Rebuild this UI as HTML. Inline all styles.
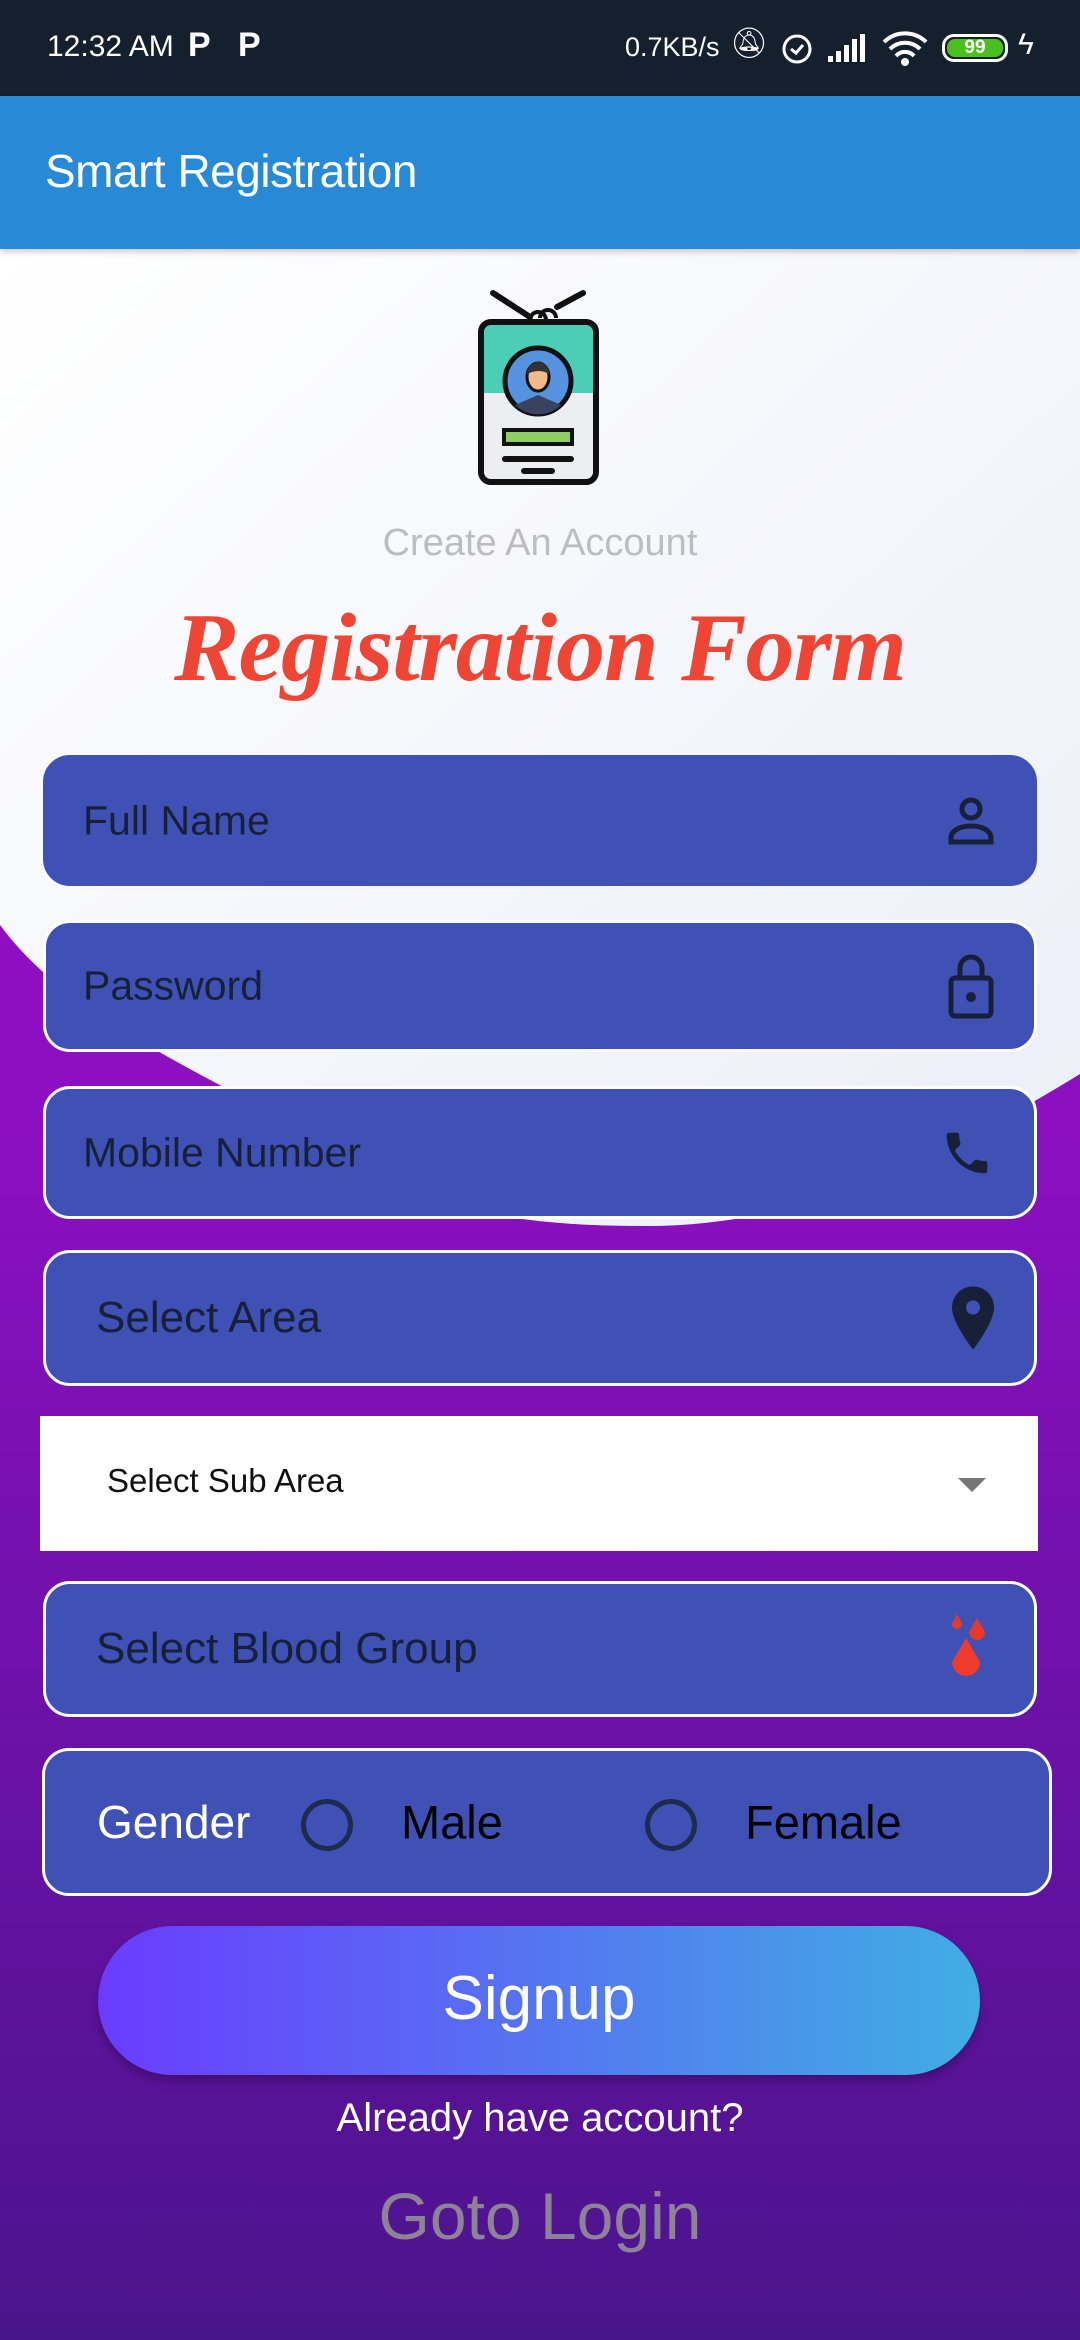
<!DOCTYPE html>
<html><head><meta charset="utf-8"><style>
*{margin:0;padding:0;box-sizing:border-box}
body{width:1080px;height:2340px;position:relative;overflow:hidden;font-family:"Liberation Sans",sans-serif;background:linear-gradient(#a60cd6 0%,#8a0fc0 50%,#4a148c 100%)}
.abs{position:absolute}
.f{position:absolute;left:43px;width:994px;background:#3f51b5;border-radius:27px;border:3px solid #fff}
.f span{position:absolute;top:50%;transform:translateY(-50%);font-size:41px;color:#172038}
.ic{position:absolute;right:40px;top:50%;transform:translateY(-50%)}
</style></head><body>
<svg class="abs" style="left:0;top:0" width="1080" height="1240">
<defs><linearGradient id="wg" x1="0" y1="0" x2="1" y2="1"><stop offset="0" stop-color="#ffffff"/><stop offset="1" stop-color="#eceef8"/></linearGradient></defs>
<path d="M0 240 H1080 V1074 C940 1160 800 1228 640 1226 C520 1226 420 1210 340 1150 C200 1070 70 1020 0 925 Z" fill="url(#wg)"/>
</svg>
<div class="abs" style="left:0;top:0;width:1080px;height:96px;background:#15202f;color:#fff;font-size:30px">
<span class="abs" style="left:47px;top:30px">12:32 AM</span>
<span class="abs" style="left:188px;top:26px;font-weight:bold;font-size:34px">P</span>
<span class="abs" style="left:238px;top:26px;font-weight:bold;font-size:34px">P</span>
<span class="abs" style="left:625px;top:32px;font-size:27px">0.7KB/s</span>
<span class="abs" style="left:730px;top:26px;font-size:30px">🔕︎</span>
<svg class="abs" style="left:780px;top:30px" width="34" height="36"><circle cx="17" cy="19" r="13" fill="none" stroke="#fff" stroke-width="3"/><path d="M11 19l5 4 7-8" fill="none" stroke="#fff" stroke-width="3"/></svg>
<svg class="abs" style="left:826px;top:32px" width="40" height="32"><path d="M2 30h5v-6H2zM10 30h5v-11h-5zM18 30h5v-17h-5zM26 30h5v-23h-5zM34 30h5v-28h-5z" fill="#fff"/></svg>
<svg class="abs" style="left:882px;top:30px" width="46" height="36"><path d="M2 12a30 30 0 0 1 42 0M8 19a21 21 0 0 1 30 0M14 26a12 12 0 0 1 18 0" fill="none" stroke="#fff" stroke-width="4"/><circle cx="23" cy="32" r="4" fill="#fff"/></svg>
<div class="abs" style="left:942px;top:34px;width:66px;height:28px;border:3px solid #fff;border-radius:12px;padding:2px"><div style="width:100%;height:100%;background:#49c01e;border-radius:8px;font-size:19px;font-weight:bold;text-align:center;line-height:18px;color:#fff">99</div></div>
<span class="abs" style="left:1018px;top:28px;font-size:30px">ϟ</span>
</div>
<div class="abs" style="left:0;top:96px;width:1080px;height:153px;background:#2889d6;box-shadow:0 3px 6px rgba(0,0,0,.2)">
<span class="abs" style="left:45px;top:48px;font-size:46px;color:#fff;letter-spacing:-0.5px">Smart Registration</span>
</div>
<svg class="abs" style="left:470px;top:285px" width="140" height="205" viewBox="470 285 140 205">
<path d="M493 293L530 317M583 293L557 307" stroke="#111" stroke-width="6" stroke-linecap="round"/>
<path d="M530 320a8 8 0 0 1 16 0M540 318a8 8 0 0 1 16 0" fill="none" stroke="#111" stroke-width="4"/>
<rect x="481" y="322" width="115" height="160" rx="10" fill="#eceef2"/>
<path d="M491 322h95a10 10 0 0 1 10 10v61h-115v-61a10 10 0 0 1 10-10z" fill="#4ccdb6"/>
<rect x="481" y="322" width="115" height="160" rx="10" fill="none" stroke="#111" stroke-width="6"/>
<circle cx="538" cy="381" r="33" fill="#5592e0" stroke="#111" stroke-width="5"/>
<path d="M515 405l23-10 23 10a33 33 0 0 1-46 0z" fill="#3a4260"/>
<ellipse cx="538" cy="377" rx="11" ry="14" fill="#f2b98c" stroke="#111" stroke-width="3"/>
<path d="M527 374a11 12 0 0 1 22 0c-6-4-14-4-22 0z" fill="#333"/>
<rect x="504" y="430" width="68" height="14" fill="#8fcf62" stroke="#111" stroke-width="4"/>
<path d="M505 459h66M524 471h28" stroke="#111" stroke-width="6" stroke-linecap="round"/>
</svg>
<div class="abs" style="left:0;width:1080px;top:522px;text-align:center;font-size:38px;color:#bdbdbd">Create An Account</div>
<div class="abs" style="left:0;width:1080px;top:592px;text-align:center;font-family:'Liberation Serif',serif;font-style:italic;font-weight:bold;font-size:98px;color:#ef4535;letter-spacing:-1px">Registration Form</div>

<div class="f" style="top:755px;height:131px;border-color:#3f51b5"><span style="left:37px">Full Name</span>
<svg class="ic" width="46" height="50" viewBox="0 0 46 50"><circle cx="23" cy="13" r="9" fill="none" stroke="#172038" stroke-width="5"/><path d="M3 46v-4c0-8 10-12 20-12s20 4 20 12v4z" fill="none" stroke="#172038" stroke-width="5"/></svg></div>
<div class="f" style="top:920px;height:132px"><span style="left:37px">Password</span>
<svg class="ic" width="46" height="68" viewBox="0 0 46 68"><path d="M12 26V16a11 11 0 0 1 22 0v10" fill="none" stroke="#172038" stroke-width="5"/><rect x="3" y="26" width="40" height="38" rx="4" fill="none" stroke="#172038" stroke-width="5"/><circle cx="23" cy="45" r="5" fill="#172038"/></svg></div>
<div class="f" style="top:1086px;height:133px"><span style="left:37px">Mobile Number</span>
<svg class="ic" width="54" height="58" viewBox="0 0 24 24"><path d="M6.6 10.8c1.4 2.8 3.8 5.1 6.6 6.6l2.2-2.2c.3-.3.7-.4 1-.2 1.1.4 2.3.6 3.6.6.6 0 1 .4 1 1V20c0 .6-.4 1-1 1C10.6 21 3 13.4 3 4c0-.6.4-1 1-1h3.5c.6 0 1 .4 1 1 0 1.3.2 2.5.6 3.6.1.3 0 .7-.2 1z" fill="#172038"/></svg></div>
<div class="f" style="top:1250px;height:136px"><span style="left:50px;font-size:44px">Select Area</span>
<svg class="ic" width="42" height="64" viewBox="0 0 24 36"><path d="M12 0C5 0 0 5.5 0 12c0 9 12 24 12 24s12-15 12-24C24 5.5 19 0 12 0z" fill="#172038"/><circle cx="12" cy="12" r="4" fill="#3f51b5"/></svg></div>
<div class="abs" style="left:40px;top:1416px;width:998px;height:135px;background:#fff">
<span class="abs" style="left:67px;top:46px;font-size:33px;color:#111">Select Sub Area</span>
<div class="abs" style="left:918px;top:62px;width:0;height:0;border-left:14px solid transparent;border-right:14px solid transparent;border-top:14px solid #757575"></div></div>
<div class="f" style="top:1581px;height:136px"><span style="left:50px;font-size:44px">Select Blood Group</span>
<svg class="ic" style="right:45px" width="44" height="70" viewBox="0 0 44 70"><path d="M12 0l5 10a5 5 0 0 1-10 0z" fill="#e53a2a"/><path d="M32 4l8 14a8 8 0 0 1-16 0z" fill="#e53a2a"/><path d="M21 24l14 24a14 14 0 0 1-28 0z" fill="#ef3b2c"/></svg></div>
<div class="f" style="top:1748px;height:148px;width:1010px;left:42px">
<span style="left:52px;color:#fff;font-size:46px">Gender</span>
<div class="abs" style="left:256px;top:48px;width:52px;height:52px;border:5px solid #1e2a50;border-radius:50%"></div>
<span style="left:356px;color:#000;font-size:47px">Male</span>
<div class="abs" style="left:600px;top:48px;width:52px;height:52px;border:5px solid #1e2a50;border-radius:50%"></div>
<span style="left:700px;color:#000;font-size:47px">Female</span></div>
<div class="abs" style="left:98px;top:1926px;width:882px;height:149px;border-radius:75px;background:linear-gradient(90deg,#6a3cff,#40aee3);box-shadow:0 6px 10px rgba(0,0,0,.25);text-align:center;line-height:145px;color:#fff;font-size:62px">Signup</div>
<div class="abs" style="left:0;width:1080px;top:2096px;text-align:center;color:#fff;font-size:40px">Already have account?</div>
<div class="abs" style="left:0;width:1080px;top:2178px;text-align:center;color:#8e8296;font-size:66px">Goto Login</div>
</body></html>
